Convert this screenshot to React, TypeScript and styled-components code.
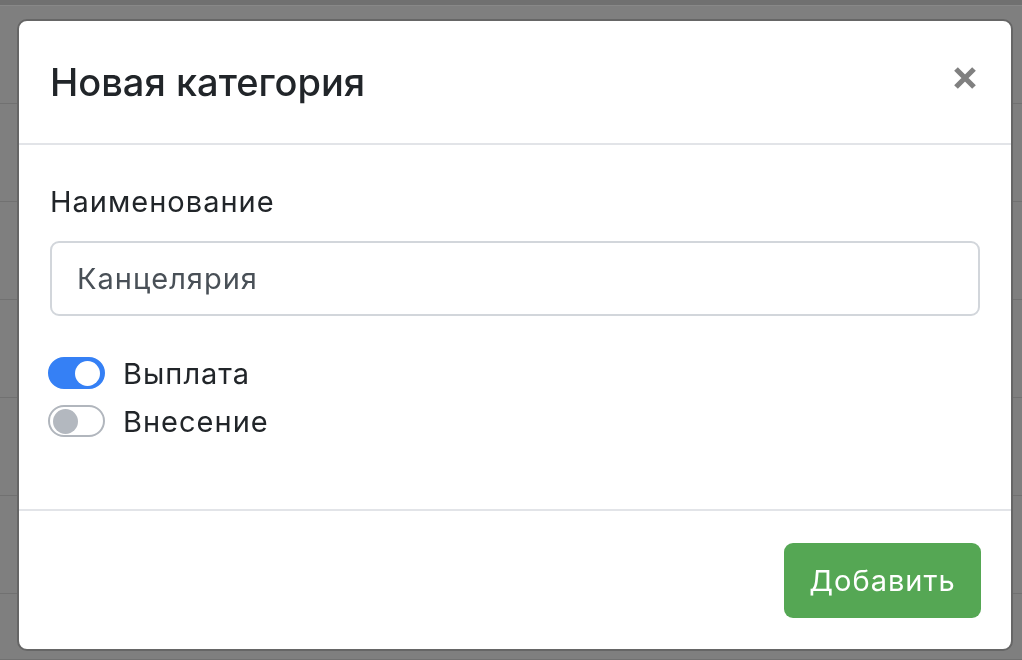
import React from "react";
import styled, { createGlobalStyle } from "styled-components";

const Global = createGlobalStyle`
  html, body { margin: 0; padding: 0; }
  body {
    background: #7f7f7f;
    font-family: Inter, "Noto Sans", "Liberation Sans", sans-serif;
    overflow: hidden;
  }
`;

const Page = styled.div`
  width: 1022px;
  height: 660px;
  display: flex;
  flex-direction: column;
  background: #7f7f7f;
`;

const TopBar = styled.div`
  height: 7px;
  background: #707070;
  border-bottom: 1px solid #888;
`;

const BgRow = styled.div<{ $h: number }>`
  height: ${(p) => p.$h}px;
  flex: none;
  border-bottom: 1px solid #717171;
  box-sizing: border-box;
`;

const Overlay = styled.div`
  position: fixed;
  inset: 0;
  display: flex;
  align-items: flex-start;
  padding: 19px 0 0 17px;
`;

const Dialog = styled.div`
  width: 996px;
  height: 632px;
  box-sizing: border-box;
  background: #fff;
  border: 2px solid #666;
  border-radius: 10px;
  display: flex;
  flex-direction: column;
  overflow: hidden;
`;

const Header = styled.div`
  height: 124px;
  flex: none;
  box-sizing: border-box;
  display: flex;
  align-items: center;
  justify-content: space-between;
  padding: 0 34px 0 31px;
  border-bottom: 2px solid #e2e4e8;
`;

const Title = styled.h5`
  margin: 0;
  font-size: 38px;
  font-weight: 500;
  color: #212529;
  letter-spacing: 0;
`;

const Close = styled.button`
  border: 0;
  background: none;
  padding: 0;
  width: 24px;
  height: 24px;
  margin-top: -8px;
  display: flex;
  cursor: pointer;
`;

const Body = styled.div`
  flex: 1;
  padding: 34px 31px 0 31px;
  display: flex;
  flex-direction: column;
`;

const Label = styled.label`
  font-size: 29px;
  letter-spacing: 1px;
  line-height: 46px;
  color: #212529;
  margin-bottom: 16px;
`;

const Input = styled.div`
  height: 75px;
  flex: none;
  box-sizing: border-box;
  border: 2px solid #d2d6db;
  border-radius: 9px;
  display: flex;
  align-items: center;
  padding: 0 24px 0 25px;
  font-size: 29px;
  letter-spacing: 1px;
  color: #495057;
  margin-bottom: 33px;
`;

const SwitchRow = styled.div`
  height: 48px;
  flex: none;
  display: flex;
  align-items: center;
  gap: 18px;
  font-size: 29px;
  letter-spacing: 1px;
  color: #212529;
`;

const Track = styled.span<{ $on: boolean }>`
  width: 57px;
  height: 32px;
  margin-left: -2px;
  box-sizing: border-box;
  border-radius: 16px;
  border: 2px solid ${(p) => (p.$on ? "#3580f5" : "#b1b6bd")};
  background: ${(p) => (p.$on ? "#3580f5" : "#fff")};
  display: flex;
  align-items: center;
  justify-content: ${(p) => (p.$on ? "flex-end" : "flex-start")};
  padding: 0 3px;
`;

const Knob = styled.span<{ $on: boolean }>`
  width: 25px;
  height: 25px;
  border-radius: 50%;
  background: ${(p) => (p.$on ? "#fff" : "#b3b8bf")};
`;

const Footer = styled.div`
  height: 140px;
  flex: none;
  box-sizing: border-box;
  border-top: 2px solid #e2e4e8;
  display: flex;
  align-items: center;
  justify-content: flex-end;
  padding: 0 30px;
`;

const Button = styled.button`
  width: 197px;
  height: 75px;
  border: 0;
  border-radius: 9px;
  background: #55a754;
  color: #fff;
  font-family: inherit;
  font-size: 29px;
  letter-spacing: 1px;
  cursor: pointer;
`;

function Switch({ on, label }: { on: boolean; label: string }) {
  return (
    <SwitchRow>
      <Track $on={on}>
        <Knob $on={on} />
      </Track>
      <span>{label}</span>
    </SwitchRow>
  );
}

export default function App() {
  const rows = [98, 98, 98, 98, 98, 98, 66];
  return (
    <>
      <Global />
      <Page>
        <TopBar />
        {rows.map((h, i) => (
          <BgRow key={i} $h={h} />
        ))}
      </Page>
      <Overlay>
        <Dialog>
          <Header>
            <Title>Новая категория</Title>
            <Close aria-label="Закрыть">
              <svg width="24" height="24" viewBox="0 0 24 24">
                <path d="M3 3 L21 21 M21 3 L3 21" stroke="#808080" strokeWidth="5.2" fill="none" />
              </svg>
            </Close>
          </Header>
          <Body>
            <Label>Наименование</Label>
            <Input>Канцелярия</Input>
            <Switch on label="Выплата" />
            <Switch on={false} label="Внесение" />
          </Body>
          <Footer>
            <Button>Добавить</Button>
          </Footer>
        </Dialog>
      </Overlay>
    </>
  );
}
